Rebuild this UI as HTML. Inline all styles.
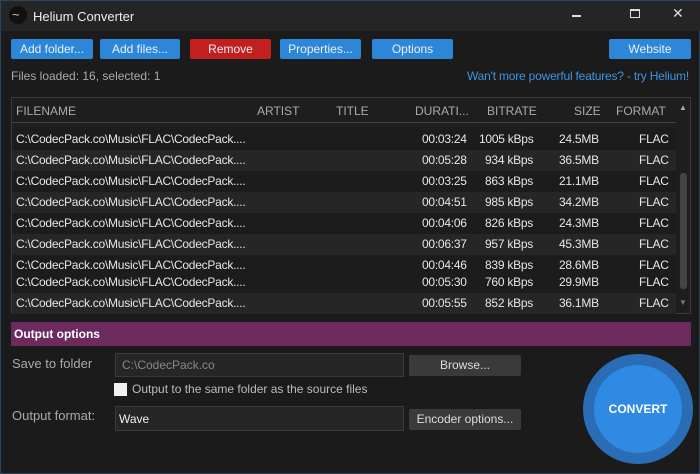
<!DOCTYPE html><html><head><style>
*{margin:0;padding:0;box-sizing:border-box}
body{width:700px;height:474px;background:#1b1b1b;font-family:"Liberation Sans",sans-serif;color:#ddd;position:relative;overflow:hidden;font-size:12px;border:1px solid #2b4560}
.a{position:absolute}
.btn{position:absolute;height:20px;background:#2d86d8;color:#e8f0fa;font-size:12px;text-align:center;line-height:20px;border-radius:2px}
.gb{position:absolute;background:#3a3a3a;color:#ddd;text-align:center;font-size:12px;line-height:20px;border-radius:2px}
.row{position:absolute;left:11px;width:664px;height:21px;font-size:12px;color:#e6e6e6;line-height:21px;letter-spacing:-0.25px}
.row span{position:absolute}
</style></head><body>
<div class="a" style="left:0;top:0;width:700px;height:30px;background:#252525"></div>
<div class="a" style="left:8px;top:5px;width:18px;height:18px;border-radius:50%;background:#111"></div>
<div class="a" style="left:11px;top:6px;font-size:13px;color:#e8d080">~</div>
<div class="a" style="left:32px;top:8px;font-size:13px;color:#eee">Helium Converter</div>
<div class="a" style="left:571px;top:14px;width:9px;height:2px;background:#ddd"></div>
<div class="a" style="left:629px;top:8px;width:10px;height:9px;border:1px solid #ddd;border-top-width:2px"></div>
<div class="a" style="left:671px;top:4px;font-size:14px;color:#ddd">✕</div>
<div class="btn" style="left:10px;top:38px;width:82px">Add folder...</div>
<div class="btn" style="left:99px;top:38px;width:80px">Add files...</div>
<div class="btn" style="left:189px;top:38px;width:81px;background:#c41f1f">Remove</div>
<div class="btn" style="left:279px;top:38px;width:81px">Properties...</div>
<div class="btn" style="left:371px;top:38px;width:81px">Options</div>
<div class="btn" style="left:608px;top:38px;width:82px">Website</div>
<div class="a" style="left:10px;top:68px;color:#aaa;font-size:12px">Files loaded: 16, selected: 1</div>
<div class="a" style="right:10px;top:68px;color:#3d95e0;font-size:12px;letter-spacing:-0.2px">Wan't more powerful features? - try Helium!</div>
<div class="a" style="left:10px;top:96px;width:680px;height:217px;border:1px solid #3a3a3a;background:#1e1e1e"></div>
<div class="a" style="left:11px;top:97px;width:664px;height:25px;background:#1e1e1e;border-bottom:1px solid #444;color:#aaa;font-size:12px;line-height:26px">
<span class="a" style="left:4px">FILENAME</span><span class="a" style="left:245px">ARTIST</span><span class="a" style="left:324px">TITLE</span><span class="a" style="left:403px">DURATI...</span><span class="a" style="left:475px">BITRATE</span><span class="a" style="left:562px">SIZE</span><span class="a" style="left:604px">FORMAT</span></div>
<div class="a" style="left:676px;top:97px;width:13px;height:215px;background:#1e1e1e"></div>
<div class="a" style="left:678px;top:102px;font-size:8px;color:#aaa">▲</div>
<div class="a" style="left:679px;top:172px;width:7px;height:116px;background:#444;border-radius:3px"></div>
<div class="a" style="left:678px;top:297px;font-size:8px;color:#777">▼</div>
<div class="row" style="top:128px;background:#1c1c1c"><span style="left:4px">C:\CodecPack.co\Music\FLAC\CodecPack....</span><span style="left:410px">00:03:24</span><span style="left:467px">1005 kBps</span><span style="left:547px">24.5MB</span><span style="left:627px">FLAC</span></div>
<div class="row" style="top:149px;background:#262626"><span style="left:4px">C:\CodecPack.co\Music\FLAC\CodecPack....</span><span style="left:410px">00:05:28</span><span style="left:473px">934 kBps</span><span style="left:547px">36.5MB</span><span style="left:627px">FLAC</span></div>
<div class="row" style="top:170px;background:#1c1c1c"><span style="left:4px">C:\CodecPack.co\Music\FLAC\CodecPack....</span><span style="left:410px">00:03:25</span><span style="left:473px">863 kBps</span><span style="left:547px">21.1MB</span><span style="left:627px">FLAC</span></div>
<div class="row" style="top:191px;background:#262626"><span style="left:4px">C:\CodecPack.co\Music\FLAC\CodecPack....</span><span style="left:410px">00:04:51</span><span style="left:473px">985 kBps</span><span style="left:547px">34.2MB</span><span style="left:627px">FLAC</span></div>
<div class="row" style="top:212px;background:#1c1c1c"><span style="left:4px">C:\CodecPack.co\Music\FLAC\CodecPack....</span><span style="left:410px">00:04:06</span><span style="left:473px">826 kBps</span><span style="left:547px">24.3MB</span><span style="left:627px">FLAC</span></div>
<div class="row" style="top:233px;background:#262626"><span style="left:4px">C:\CodecPack.co\Music\FLAC\CodecPack....</span><span style="left:410px">00:06:37</span><span style="left:473px">957 kBps</span><span style="left:547px">45.3MB</span><span style="left:627px">FLAC</span></div>
<div class="row" style="top:254px;background:#1c1c1c;height:38px"><span style="left:4px;top:0">C:\CodecPack.co\Music\FLAC\CodecPack....</span><span style="left:410px;top:0">00:04:46</span><span style="left:473px;top:0">839 kBps</span><span style="left:547px;top:0">28.6MB</span><span style="left:627px;top:0">FLAC</span>
<span style="left:4px;top:17px">C:\CodecPack.co\Music\FLAC\CodecPack....</span><span style="left:410px;top:17px">00:05:30</span><span style="left:473px;top:17px">760 kBps</span><span style="left:547px;top:17px">29.9MB</span><span style="left:627px;top:17px">FLAC</span></div>
<div class="row" style="top:292px;background:#262626"><span style="left:4px">C:\CodecPack.co\Music\FLAC\CodecPack....</span><span style="left:410px">00:05:55</span><span style="left:473px">852 kBps</span><span style="left:547px">36.1MB</span><span style="left:627px">FLAC</span></div>
<div class="a" style="left:10px;top:321px;width:680px;height:24px;background:#6c2a5f;color:#fff;font-weight:bold;font-size:12px;line-height:24px;padding-left:3px">Output options</div>
<div class="a" style="left:11px;top:355px;color:#aaa;font-size:13px">Save to folder</div>
<div class="a" style="left:114px;top:352px;width:289px;height:24px;background:#262626;border:1px solid #3a3a3a;color:#888;line-height:22px;padding-left:6px">C:\CodecPack.co</div>
<div class="gb" style="left:408px;top:354px;width:112px;height:21px">Browse...</div>
<div class="a" style="left:113px;top:382px;width:13px;height:13px;background:#f0f0f0"></div>
<div class="a" style="left:131px;top:381px;color:#bbb;font-size:12px">Output to the same folder as the source files</div>
<div class="a" style="left:11px;top:407px;color:#aaa;font-size:13px">Output format:</div>
<div class="a" style="left:114px;top:405px;width:289px;height:25px;background:#262626;border:1px solid #3a3a3a;color:#eee;line-height:24px;padding-left:3px">Wave</div>
<div class="gb" style="left:408px;top:408px;width:112px;height:21px">Encoder options...</div>
<div class="a" style="left:582px;top:353px;width:110px;height:110px;border-radius:50%;background:#2a6cb5"></div>
<div class="a" style="left:593px;top:364px;width:88px;height:88px;border-radius:50%;background:#2f8ae3;color:#fff;font-weight:bold;font-size:12px;text-align:center;line-height:88px">CONVERT</div>
</body></html>
